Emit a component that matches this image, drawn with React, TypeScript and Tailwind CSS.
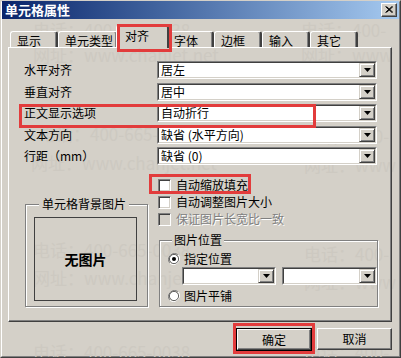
import React from 'react'

const FONT = { fontFamily: '"Noto Sans CJK SC", "Noto Sans", sans-serif' }

const TABS = ['显示', '单元类型', '对齐', '字体', '边框', '输入', '其它']
const TAB_W: Record<string, string> = {
  显示: 'w-[48px]',
  单元类型: 'w-[60px]',
  对齐: 'w-[53px]',
  字体: 'w-[47px]',
  边框: 'w-[48px]',
  输入: 'w-[48px]',
  其它: 'w-[48px]',
}

const ROWS = [
  { label: '水平对齐', value: '居左' },
  { label: '垂直对齐', value: '居中' },
  { label: '正文显示选项', value: '自动折行' },
  { label: '文本方向', value: '缺省 (水平方向)' },
  { label: '行距（mm）', value: '缺省 (0)' },
]

// faint watermark across the dialog
const MARKS = [
  { t: '电话：400-665-0038', x: 32, y: 20 },
  { t: '电话：400-', x: 300, y: 20 },
  { t: '网址：www.chanjet.net', x: 32, y: 45 },
  { t: '网址：www', x: 300, y: 45 },
  { t: '电话：400-665-0038', x: 38, y: 124 },
  { t: '电话：400-', x: 303, y: 126 },
  { t: '网址：www.chanjet.net', x: 30, y: 153 },
  { t: '网址：www', x: 303, y: 155 },
  { t: '电话：400-665-0038', x: 32, y: 240 },
  { t: '电话：400-', x: 303, y: 244 },
  { t: '网址：www.chanjet.net', x: 32, y: 268 },
  { t: '网址：www', x: 303, y: 272 },
  { t: '电话：400-665-0038', x: 32, y: 342 },
  { t: '电话：400-', x: 303, y: 342 },
]

const Arrow = () => (
  <svg width="7" height="4" viewBox="0 0 7 4">
    <polygon points="0,0 7,0 3.5,4" fill="#000" />
  </svg>
)

const DropBtn = () => (
  <div className="flex h-full w-[16px] items-center justify-center bg-[#d4d0c8] border border-t-[#d4d0c8] border-l-[#d4d0c8] border-r-[#404040] border-b-[#404040] shadow-[inset_1px_1px_0_#fff,inset_-1px_-1px_0_#808080]">
    <Arrow />
  </div>
)

const Select = ({ value, w }: { value: string; w: string }) => (
  <div className={`flex h-[18px] ${w} border border-t-[#808080] border-l-[#808080] border-r-white border-b-white`}>
    <div className="flex flex-1 items-center bg-white border border-t-[#404040] border-l-[#404040] border-r-[#d4d0c8] border-b-[#d4d0c8]">
      <span className="flex-1 pl-[2px] text-[12px] leading-[14px] whitespace-nowrap">{value}</span>
      <DropBtn />
    </div>
  </div>
)

const Check = ({ disabled }: { disabled?: boolean }) => (
  <span
    className={`h-[13px] w-[13px] shrink-0 border border-t-[#808080] border-l-[#808080] border-r-white border-b-white shadow-[inset_1px_1px_0_#404040,inset_-1px_-1px_0_#d4d0c8] ${
      disabled ? 'bg-[#d4d0c8]' : 'bg-white'
    }`}
  />
)

const Radio = ({ on }: { on?: boolean }) => (
  <svg width="12" height="12" viewBox="0 0 12 12" className="shrink-0">
    <path d="M10.2 1.8 A6 6 0 0 0 1.8 10.2" fill="none" stroke="#808080" />
    <path d="M1.8 10.2 A6 6 0 0 0 10.2 1.8" fill="none" stroke="#fff" />
    <circle cx="6" cy="6" r="4.6" fill="#fff" stroke="#404040" strokeWidth="0.8" />
    {on && <circle cx="6" cy="6" r="2" fill="#000" />}
  </svg>
)

export default function App() {
  return (
    <div
      style={FONT}
      className="relative flex h-[358px] w-[401px] flex-col overflow-hidden bg-[#d4d0c8] text-black border border-t-[#d4d0c8] border-l-[#d4d0c8] border-r-[#404040] border-b-[#404040]"
    >
      <div className="flex flex-1 flex-col border border-t-[#d4d0c8] border-l-white border-r-[#808080] border-b-[#808080]">
        {/* title bar */}
        <div className="flex h-[19px] items-center justify-between bg-gradient-to-r from-[#0a246a] to-[#a6caf0] pl-[3px] pr-[2px] -mt-[2px]">
          <span className="text-[13px] font-bold leading-[15px] text-white">单元格属性</span>
          <div className="flex h-[14px] w-[16px] items-center justify-center bg-[#d4d0c8] border border-t-white border-l-white border-r-[#404040] border-b-[#404040] shadow-[inset_-1px_-1px_0_#808080]">
            <svg width="8" height="7" viewBox="0 0 8 7">
              <path d="M0.5 0.5 L7 6.5 M1.5 0.5 L8 6.5 M7 0.5 L0.5 6.5 M8 0.5 L1.5 6.5" stroke="#000" strokeWidth="1" />
            </svg>
          </div>
        </div>

        <div className="relative z-10 flex flex-1 flex-col pl-[6px] pr-[7px]">
          {/* tabs */}
          <div className="mt-[6px] flex h-[22px] items-end pl-[2px]">
            {TABS.map((t) =>
              t === '对齐' ? (
                <div
                  key={t}
                  className={`relative z-10 -mx-[2px] -mb-[1px] h-[23px] ${TAB_W[t]} rounded-t-[3px] bg-[#d4d0c8] pl-[8px] pt-[3px] text-[12px] leading-[14px] border-t border-l border-t-white border-l-white border-r-2 border-r-[#404040]`}
                >
                  {t}
                </div>
              ) : (
                <div
                  key={t}
                  className={`h-[16px] ${TAB_W[t]} rounded-t-[3px] bg-[#d4d0c8] pl-[6px] pt-[2px] text-[12px] leading-[13px] border-t border-l border-t-white border-l-white border-r-2 border-r-[#404040] shadow-[inset_-1px_0_0_#808080]`}
                >
                  {t}
                </div>
              )
            )}
          </div>

          {/* panel */}
          <div className="flex h-[275px] flex-col bg-transparent pl-[15px] pt-[13px] border-t border-l border-t-white border-l-white border-r border-b border-r-[#404040] border-b-[#404040] shadow-[inset_-1px_-1px_0_#808080]">
            <div className="flex flex-col gap-[3.5px]">
              {ROWS.map((r) => (
                <div key={r.label} className="flex h-[18px] items-center">
                  <span className="w-[133px] text-[12px] leading-[14px]">{r.label}</span>
                  <Select value={r.value} w="w-[220px]" />
                </div>
              ))}
            </div>

            <div className="mt-[12px] flex">
              {/* left picture group */}
              <fieldset className="mt-[20px] ml-[1px] h-[110px] w-[123px] border border-[#808080] px-[8px] shadow-[inset_1px_1px_0_#fff,1px_1px_0_#fff]">
                <legend className="ml-[5px] bg-[#d4d0c8] px-[3px] text-[12px] leading-[14px]">单元格背景图片</legend>
                <div className="mt-[6px] flex h-[84px] w-[103px] items-center justify-center border border-[#404040] text-[14px] font-bold">
                  无图片
                </div>
              </fieldset>

              <div className="ml-[10px] flex w-[220px] flex-col">
                <div className="flex h-[16px] items-center gap-[5px]">
                  <Check />
                  <span className="text-[12px] leading-[14px]">自动缩放填充</span>
                </div>
                <div className="mt-[1px] flex h-[16px] items-center gap-[5px]">
                  <Check />
                  <span className="text-[12px] leading-[14px]">自动调整图片大小</span>
                </div>
                <div className="mt-[1px] flex h-[16px] items-center gap-[5px]">
                  <Check disabled />
                  <span className="text-[12px] leading-[14px] text-[#808080] [text-shadow:1px_1px_0_#fff]">保证图片长宽比一致</span>
                </div>

                <fieldset className="mt-[6px] ml-[1px] h-[74px] w-[219px] border border-[#808080] pl-[8px] shadow-[inset_1px_1px_0_#fff,1px_1px_0_#fff]">
                  <legend className="ml-[4px] bg-[#d4d0c8] px-[2px] text-[12px] leading-[14px]">图片位置</legend>
                  <div className="mt-[5px] flex h-[14px] items-center gap-[4px]">
                    <Radio on />
                    <span className="text-[12px] leading-[14px]">指定位置</span>
                  </div>
                  <div className="ml-[14px] mt-[1px] flex gap-[6px]">
                    <Select value="" w="w-[94px]" />
                    <Select value="" w="w-[95px]" />
                  </div>
                  <div className="mt-[4px] flex h-[14px] items-center gap-[4px]">
                    <Radio />
                    <span className="text-[12px] leading-[14px]">图片平铺</span>
                  </div>
                </fieldset>
              </div>
            </div>
          </div>

          {/* buttons */}
          <div className="mt-[6px] flex justify-end gap-[5px]">
            <button className="h-[23px] w-[76px] border border-black bg-[#d4d0c8] p-0">
              <div className="flex h-full w-full items-center justify-center border border-t-white border-l-white border-r-[#404040] border-b-[#404040] shadow-[inset_-1px_-1px_0_#808080] text-[12px]">
                确定
              </div>
            </button>
            <button className="flex h-[22px] w-[75px] items-center justify-center bg-[#d4d0c8] text-[12px] border border-t-white border-l-white border-r-[#404040] border-b-[#404040] shadow-[inset_-1px_-1px_0_#808080]">
              取消
            </button>
          </div>
        </div>
      </div>

      {/* watermark */}
      {MARKS.map((m, i) => (
        <span
          key={i}
          className="pointer-events-none absolute whitespace-nowrap text-[17px] leading-[18px] text-[#cdc9c1]"
          style={{ left: m.x, top: m.y }}
        >
          {m.t}
        </span>
      ))}

      {/* red annotation boxes */}
      <div className="pointer-events-none absolute left-[116px] top-[23px] z-20 h-[28px] w-[55px] border-[3px] border-[#e23c3c]" />
      <div className="pointer-events-none absolute left-[18px] top-[103px] z-20 h-[24px] w-[297px] border-[3px] border-[#e23c3c]" />
      <div className="pointer-events-none absolute left-[148px] top-[173px] z-20 h-[20px] w-[102px] border-[3px] border-[#e23c3c]" />
      <div className="pointer-events-none absolute left-[232px] top-[322px] z-20 h-[31px] w-[82px] border-[3px] border-[#e23c3c]" />
    </div>
  )
}
